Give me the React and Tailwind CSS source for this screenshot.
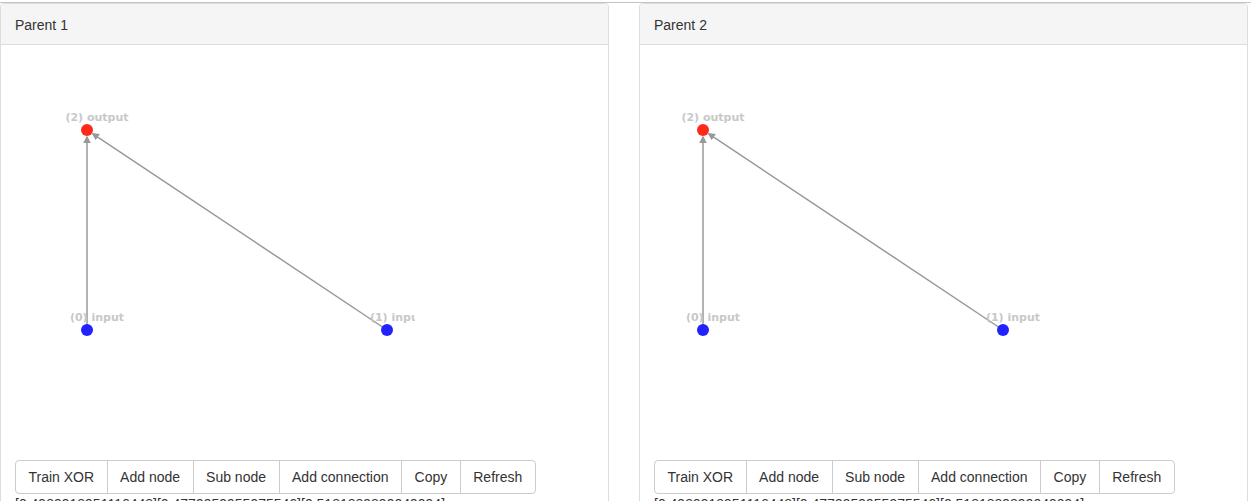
import React from 'react'

const BUTTONS = ['Train XOR', 'Add node', 'Sub node', 'Add connection', 'Copy', 'Refresh']

function Graph({ ox }) {
  // node positions inside the svg
  const out = { x: ox, y: 70 }
  const in0 = { x: ox, y: 270 }
  const in1 = { x: ox + 300, y: 270 }
  const nodes = [
    { ...out, label: '(2) output', fill: '#ff2a1a' },
    { ...in0, label: '(0) input', fill: '#2222ff' },
    { ...in1, label: '(1) input', fill: '#2222ff' },
  ]
  const edge = (a, b) => {
    const dx = b.x - a.x
    const dy = b.y - a.y
    const len = Math.hypot(dx, dy)
    const ux = dx / len
    const uy = dy / len
    return { x1: a.x, y1: a.y, x2: b.x - ux * 7, y2: b.y - uy * 7 }
  }
  const edges = [edge(in0, out), edge(in1, out)]
  return (
    <svg width="400" height="400" className="block overflow-hidden">
      <defs>
        <marker id={`arrow-${ox}`} viewBox="0 0 10 10" refX="8" refY="5" markerWidth="5" markerHeight="5" orient="auto">
          <path d="M0,0 L10,5 L0,10 z" fill="#999" />
        </marker>
      </defs>
      {edges.map((e, i) => (
        <line key={i} {...e} stroke="#999" strokeWidth="1.5" markerEnd={`url(#arrow-${ox})`} />
      ))}
      {nodes.map((n) => (
        <g key={n.label}>
          <circle cx={n.x} cy={n.y} r="6" fill={n.fill} />
          <text
            x={n.x + 10}
            y={n.y - 9}
            textAnchor="middle"
            fill="#c8c8c8"
            fontSize="12.5"
            fontWeight="bold"
            fontFamily="'DejaVu Sans', Verdana, sans-serif"
            style={{ fontSize: '11px' }}
          >
            {n.label}
          </text>
        </g>
      ))}
    </svg>
  )
}

function Panel({ title, ox }) {
  return (
    <div className="w-[609px] shrink-0 border border-[#ddd] rounded-t-[4px] bg-white h-[520px] flex flex-col">
      <div className="h-[41px] pt-[2px] px-[14px] flex items-center bg-[#f5f5f5] border-b border-[#ddd] rounded-t-[3px] text-[14px] text-[#333]">
        {title}
      </div>
      <div className="px-[14px] pt-[15px]">
        <Graph ox={ox} />
        <div className="flex">
          {BUTTONS.map((b, i) => (
            <button
              key={b}
              className={`h-[34px] px-[12.5px] border border-[#ccc] bg-white text-[14px] text-[#333] ${i > 0 ? '-ml-px' : ''} ${i === 0 ? 'rounded-l-[4px]' : ''} ${i === BUTTONS.length - 1 ? 'rounded-r-[4px]' : ''}`}
            >
              {b}
            </button>
          ))}
        </div>
        <div className="text-[14px] leading-[20px] text-[#333] whitespace-nowrap">
          [0.4989918951116448][0.4779959955975546][0.5181889899049094]
        </div>
      </div>
    </div>
  )
}

export default function App() {
  return (
    <div className="w-[1251px] h-[501px] overflow-hidden bg-white font-['Liberation_Sans',Arial,sans-serif]">
      <div className="h-[2px]" />
      <div className="h-px bg-[#c4c4c4]" />
      <div className="flex gap-[30px]">
        <Panel title="Parent 1" ox={72} />
        <Panel title="Parent 2" ox={49} />
      </div>
    </div>
  )
}
